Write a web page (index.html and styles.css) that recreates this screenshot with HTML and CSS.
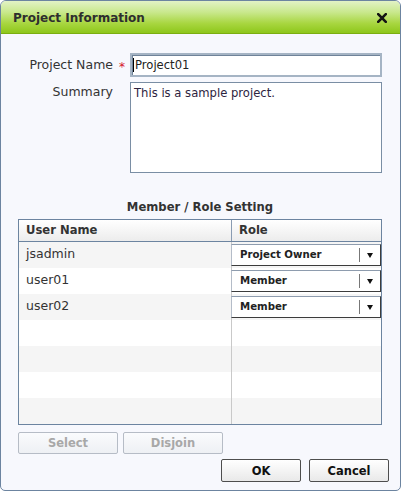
FILE: index.html
```html
<!DOCTYPE html>
<html lang="en">
<head>
  <meta charset="UTF-8">
  <meta name="viewport" content="width=device-width, initial-scale=1.0">
  <title>Project Information</title>
  <link rel="stylesheet" href="styles.css">
</head>
<body>
  <div class="dialog">
    <div class="dialog-header">
      <span class="dialog-title">Project Information</span>
      <span class="dialog-close">
        <svg width="10" height="10" viewBox="0 0 10 10">
          <path d="M1.2 1.2 L8.8 8.8 M8.8 1.2 L1.2 8.8" stroke="#141414" stroke-width="2.6" stroke-linecap="square"/>
        </svg>
      </span>
    </div>

    <div class="dialog-body">
      <!-- Project fields -->
      <div class="form-grid">
        <label class="form-label">Project Name</label>
        <span class="required">*</span>
        <div class="text-field"><span class="caret"></span>Project01</div>

        <label class="form-label summary-label">Summary</label>
        <span></span>
        <div class="text-area">This is a sample project.</div>
      </div>

      <!-- Member list -->
      <div class="section-title">Member / Role Setting</div>
      <div class="member-grid">
        <div class="grid-head">
          <div class="cell">User Name</div>
          <div class="cell">Role</div>
        </div>
        <div class="grid-row">
          <div class="cell">jsadmin</div>
          <div class="cell role-cell">
            <div class="role-select"><span class="role-text">Project Owner</span><span class="role-arrow"></span></div>
          </div>
        </div>
        <div class="grid-row">
          <div class="cell">user01</div>
          <div class="cell role-cell">
            <div class="role-select"><span class="role-text">Member</span><span class="role-arrow"></span></div>
          </div>
        </div>
        <div class="grid-row">
          <div class="cell">user02</div>
          <div class="cell role-cell">
            <div class="role-select"><span class="role-text">Member</span><span class="role-arrow"></span></div>
          </div>
        </div>
        <div class="grid-row"><div class="cell"></div><div class="cell"></div></div>
        <div class="grid-row"><div class="cell"></div><div class="cell"></div></div>
        <div class="grid-row"><div class="cell"></div><div class="cell"></div></div>
        <div class="grid-row"><div class="cell"></div><div class="cell"></div></div>
      </div>

      <div class="list-buttons">
        <button class="btn btn-disabled">Select</button>
        <button class="btn btn-disabled">Disjoin</button>
      </div>
    </div>

    <div class="dialog-footer">
      <button class="btn btn-main">OK</button>
      <button class="btn btn-main">Cancel</button>
    </div>
  </div>
</body>
</html>
```

FILE: styles.css
```css
body {
  margin: 0;
  padding: 0;
  background: #fff;
  font-family: "DejaVu Sans", Verdana, sans-serif;
  font-size: 12.5px;
  color: #333;
}

.dialog {
  box-sizing: border-box;
  width: 401px;
  height: 491px;
  border: 1px solid #6c84a0;
  border-radius: 6px 6px 5px 5px;
  background: #f7f8fd;
  overflow: hidden;
  display: flex;
  flex-direction: column;
}

.dialog-header {
  height: 32px;
  border-bottom: 1px solid #7bae10;
  background: linear-gradient(#e2f2c6 0%, #c9e88d 35%, #a8d640 70%, #8ec71b 100%);
  display: flex;
  align-items: center;
  justify-content: space-between;
  padding: 0 13px 0 12px;
}

.dialog-title {
  font-weight: bold;
  font-size: 12px;
  color: #2e2e2e;
  padding-top: 1px;
}

.dialog-close {
  display: flex;
  padding-top: 2px;
}

.dialog-body {
  padding: 19px 18px 0 17px;
}

/* label / field grid */
.form-grid {
  display: grid;
  grid-template-columns: 95px 17px 252px;
  grid-template-rows: 24px 91px;
  row-gap: 5px;
}

.form-label {
  text-align: right;
  line-height: 24px;
}

.summary-label {
  line-height: 20px;
}

.required {
  color: #d4102a;
  text-align: center;
  font-size: 12px;
  line-height: 20px;
  padding: 4px 0 0 1px;
}

.text-field {
  box-sizing: border-box;
  height: 24px;
  border: 2px solid #a5b4c4;
  box-shadow: inset 1px 1px 0 #6f8399;
  background: #fff;
  padding: 0 2px 0 1px;
  font-size: 11.6px;
  line-height: 20px;
  color: #222;
  display: flex;
  align-items: center;
}

.caret {
  display: inline-block;
  width: 1px;
  height: 14px;
  background: #000;
  margin-right: 1px;
}

.text-area {
  box-sizing: border-box;
  height: 91px;
  border: 1px solid #7a8ea4;
  background: #fff;
  padding: 2px 3px;
  font-size: 11.6px;
  line-height: 16px;
  color: #2d2440;
}

.section-title {
  margin-top: 26px;
  text-align: center;
  font-weight: bold;
  font-size: 11.6px;
  line-height: 16px;
  color: #333;
}

/* member list */
.member-grid {
  margin-top: 4px;
  border: 1px solid #6c84a0;
  background: #fff;
}

.grid-head,
.grid-row {
  display: grid;
  grid-template-columns: 213px 149px;
}

.grid-head {
  height: 21px;
  border-bottom: 1px solid #6c84a0;
  background: linear-gradient(#ffffff, #ececec);
  font-weight: bold;
  font-size: 11.6px;
}

.grid-head .cell {
  line-height: 21px;
  padding-left: 7px;
}

.grid-head .cell:first-child {
  border-right: 1px solid #8a9cb2;
}

.grid-row {
  height: 26px;
}

.grid-row:nth-child(even) {
  background: #f5f5f5;
}

.grid-row .cell {
  padding: 4px 0 0 7px;
  line-height: 16px;
}

.grid-row .cell:first-child {
  border-right: 1px solid #c9c9c9;
}

.grid-row .role-cell {
  padding: 2px 0 0 0;
  margin-left: -1px;
}

.role-select {
  box-sizing: border-box;
  height: 22px;
  border: 1px solid;
  border-color: #8e9cae #3c3c3c #3c3c3c #b4bcc8;
  background: #fff;
  display: flex;
  align-items: center;
}

.role-text {
  flex: 1;
  font-size: 10.2px;
  font-weight: bold;
  color: #222;
  padding-left: 8px;
}

.role-arrow {
  width: 20px;
  height: 14px;
  border-left: 1px solid #777;
  position: relative;
}

.role-arrow::after {
  content: "";
  position: absolute;
  left: 7px;
  top: 5px;
  border-left: 3px solid transparent;
  border-right: 3px solid transparent;
  border-top: 5px solid #111;
}

/* buttons */
.list-buttons {
  margin-top: 7px;
  display: flex;
  gap: 5px;
}

.btn {
  font-family: "DejaVu Sans", Verdana, sans-serif;
  font-size: 11.5px;
  font-weight: bold;
  border-radius: 2px;
  padding: 0;
  cursor: pointer;
}

.btn-disabled {
  width: 100px;
  height: 22px;
  border: 1px solid #b6bcc6;
  background: linear-gradient(#fafbfd, #eef0f4);
  color: #a8a8a8;
  cursor: default;
}

.dialog-footer {
  padding: 5px 11px 0 0;
  display: flex;
  justify-content: flex-end;
  gap: 8px;
}

.btn-main {
  width: 80px;
  height: 23px;
  border: 1px solid #4e4e4e;
  background: linear-gradient(#ffffff, #e9e9e9);
  color: #111;
}
```
